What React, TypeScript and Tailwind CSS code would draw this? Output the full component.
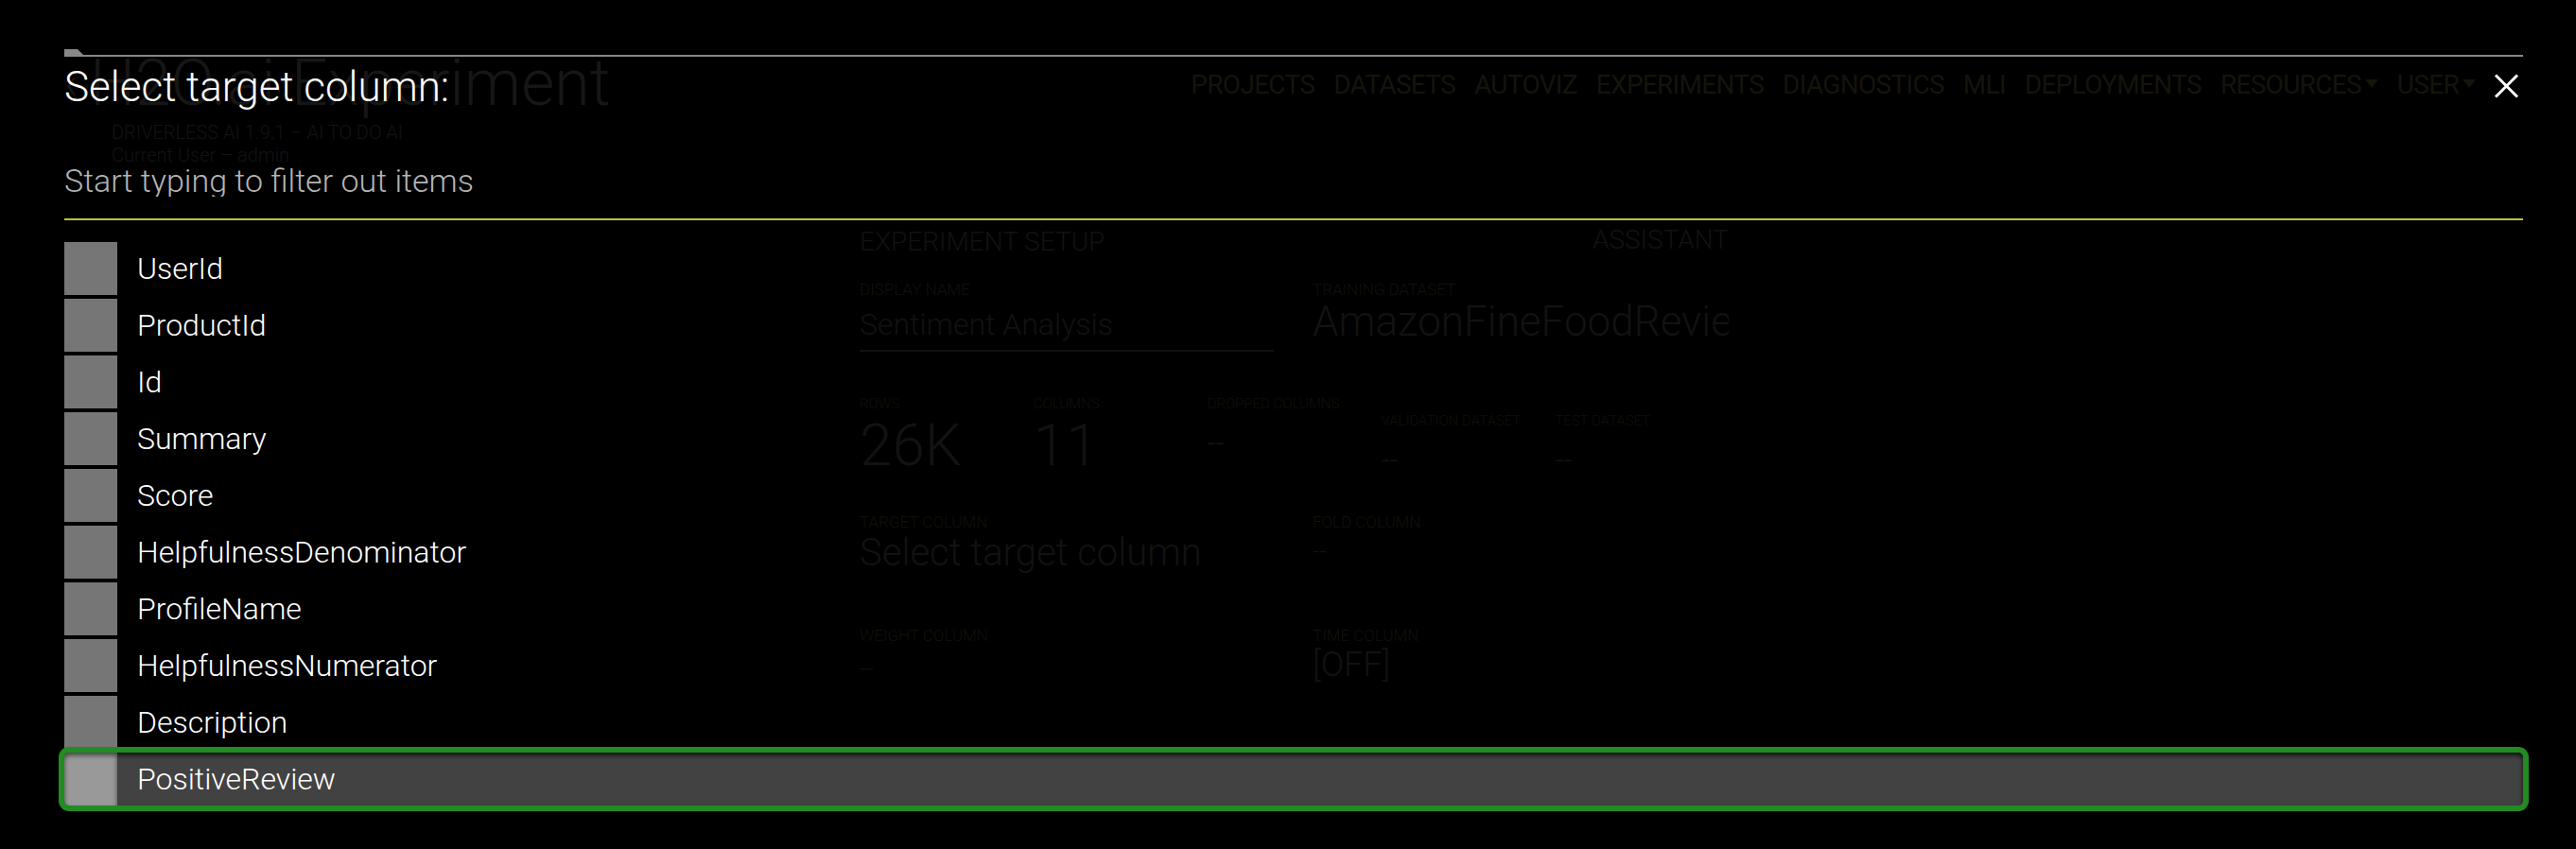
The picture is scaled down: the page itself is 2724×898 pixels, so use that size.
import { Fragment } from 'react'

const columns = [
  'UserId',
  'ProductId',
  'Id',
  'Summary',
  'Score',
  'HelpfulnessDenominator',
  'ProfileName',
  'HelpfulnessNumerator',
  'Description',
  'PositiveReview',
]

const selected = 'PositiveReview'

const navItems = ['PROJECTS', 'DATASETS', 'AUTOVIZ', 'EXPERIMENTS', 'DIAGNOSTICS', 'MLI', 'DEPLOYMENTS']

const stats = [
  { label: 'ROWS', value: '26K', big: true },
  { label: 'COLUMNS', value: '11', big: true },
  { label: 'DROPPED COLUMNS', value: '--', big: false },
  { label: 'VALIDATION DATASET', value: '--', big: false, low: true },
  { label: 'TEST DATASET', value: '--', big: false, low: true },
]

function CloseIcon() {
  return (
    <svg width="27" height="26" viewBox="0 0 27 26" fill="none" stroke="#ffffff" strokeWidth="3">
      <path d="M2 1.5 L25 24.5 M25 1.5 L2 24.5" />
    </svg>
  )
}

function Caret() {
  return (
    <svg width="14" height="10" viewBox="0 0 14 10" className="ml-[4px] mt-[10px]">
      <path d="M0 0 H14 L7 9 Z" fill="#14140b" />
    </svg>
  )
}

// the experiment page behind the dialog, almost fully dimmed
function BackgroundPage() {
  return (
    <div className="select-none">
      <header className="flex items-start pl-[68px] pr-[106px] pt-[52px]">
        <div>
          <div className="flex h-[72px] items-center text-[68px] font-light leading-[72px] text-[#161616]">
            <span className="mr-[12px] text-[50px]">‹</span>H2O.ai Experiment
          </div>
          <div className="mt-[4px] pl-[50px] text-[20px] font-light leading-[24px] text-[#131313]">
            <p>DRIVERLESS AI 1.9.1 – AI TO DO AI</p>
            <p>Current User – admin</p>
          </div>
        </div>
        <nav className="ml-auto mt-[22px] flex items-start gap-[20px] text-[28px] leading-[32px] tracking-tight text-[#14140b]">
          {navItems.map((item) => (
            <span key={item}>{item}</span>
          ))}
          <span className="flex">
            RESOURCES
            <Caret />
          </span>
          <span className="flex">
            USER
            <Caret />
          </span>
        </nav>
      </header>

      <main className="ml-[909px] mt-[64px] w-[919px] font-light text-[#121212]">
        <div className="flex items-start justify-between text-[28px] leading-[32px]">
          <span>EXPERIMENT SETUP</span>
          <span className="-mt-[2px]">ASSISTANT</span>
        </div>

        <div className="mt-[24px] flex gap-[41px]">
          <div className="w-[438px]">
            <p className="text-[17px] leading-[20px] text-[#111109]">DISPLAY NAME</p>
            <p className="mt-[8px] border-b-2 border-[#111] pb-[8px] text-[32px] leading-[38px]">
              Sentiment Analysis
            </p>
          </div>
          <div className="min-w-0 flex-1 overflow-hidden">
            <p className="text-[17px] leading-[20px] text-[#111109]">TRAINING DATASET</p>
            <p className="whitespace-nowrap text-[44px] leading-[48px]">AmazonFineFoodReviews</p>
          </div>
        </div>

        <div className="mt-[46px] flex">
          {stats.map((s) => (
            <div key={s.label} className={`w-[192px] ${s.low ? 'pt-[18px]' : ''}`}>
              <p className="whitespace-nowrap text-[15px] leading-[18px] text-[#101008]">{s.label}</p>
              <p className={s.big ? 'text-[62px] leading-[70px]' : 'mt-[14px] text-[32px] leading-[36px]'}>
                {s.value}
              </p>
            </div>
          ))}
        </div>

        <div className="mt-[36px] flex gap-[41px]">
          <div className="w-[438px]">
            <p className="text-[17px] leading-[20px] text-[#111109]">TARGET COLUMN</p>
            <p className="text-[40px] leading-[46px]">Select target column</p>
          </div>
          <div>
            <p className="text-[17px] leading-[20px] text-[#111109]">FOLD COLUMN</p>
            <p className="mt-[6px] text-[26px] leading-[30px]">--</p>
          </div>
        </div>

        <div className="mt-[54px] flex gap-[41px]">
          <div className="w-[438px]">
            <p className="text-[17px] leading-[20px] text-[#111109]">WEIGHT COLUMN</p>
            <p className="mt-[10px] text-[26px] leading-[30px]">--</p>
          </div>
          <div>
            <p className="text-[17px] leading-[20px] text-[#111109]">TIME COLUMN</p>
            <p className="text-[36px] leading-[42px]">[OFF]</p>
          </div>
        </div>
      </main>
    </div>
  )
}

function ColumnRow({ name }: { name: string }) {
  const isSelected = name === selected
  return (
    <li
      className={`flex h-[56px] items-center ${
        isSelected
          ? 'rounded-[5px] bg-[#424242] ring-6 ring-[#228b22] inset-shadow-[0_3px_5px_rgba(0,0,0,0.75)]'
          : ''
      }`}
    >
      <span
        className={`h-[56px] w-[56px] shrink-0 ${
          isSelected
            ? 'rounded-l-[5px] bg-[#999999] inset-shadow-[0_3px_5px_rgba(0,0,0,0.55)]'
            : 'bg-[#767676]'
        }`}
      />
      <span className="ml-[21px] text-[32px] font-light text-white">{name}</span>
    </li>
  )
}

export default function App() {
  return (
    <div
      className="relative h-[898px] w-full overflow-hidden bg-black"
      style={{ fontFamily: 'Roboto, "Liberation Sans", sans-serif' }}
    >
      <BackgroundPage />

      {/* column picker dialog */}
      <div className="absolute inset-0 flex flex-col pl-[68px] pr-[56px] pt-[52px]">
        <div className="h-[6px] w-[20px] bg-[#888888] [clip-path:polygon(0_0,70%_0,100%_100%,0_100%)]" />
        <div className="h-[2px] bg-[#888888]" />

        <div className="flex items-start justify-between">
          <h1 className="mt-[10px] text-[44px] font-light leading-[44px] text-white">Select target column:</h1>
          <button className="mr-[4px] mt-[18px]">
            <CloseIcon />
          </button>
        </div>

        <div className="mt-[60px] border-b-2 border-[#bcc23a] pb-[21px]">
          <input
            className="h-[34px] w-full bg-transparent text-[34px] font-light leading-[34px] text-white outline-none placeholder:text-[#b4b4b4]"
            placeholder="Start typing to filter out items"
          />
        </div>

        <ul className="mt-[23px] flex flex-col gap-[4px]">
          {columns.map((c) => (
            <Fragment key={c}>
              <ColumnRow name={c} />
            </Fragment>
          ))}
        </ul>
      </div>
    </div>
  )
}
